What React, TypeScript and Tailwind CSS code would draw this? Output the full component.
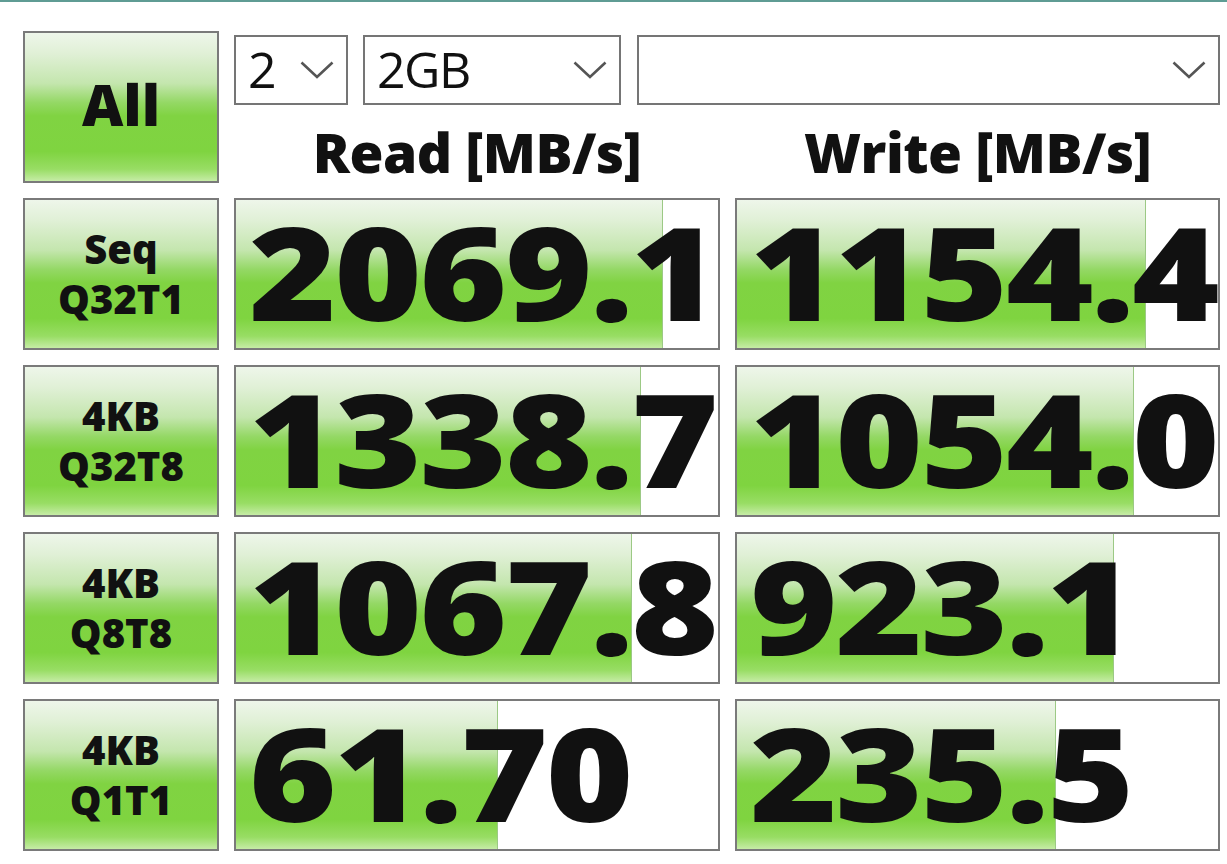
import React from "react";

type Row = {
  top: string;
  bottom: string;
  read: string;
  write: string;
  readBar: number;
  writeBar: number;
};

const rows: Row[] = [
  { top: "Seq", bottom: "Q32T1", read: "2069.1", write: "1154.4", readBar: 427, writeBar: 409 },
  { top: "4KB", bottom: "Q32T8", read: "1338.7", write: "1054.0", readBar: 405, writeBar: 397 },
  { top: "4KB", bottom: "Q8T8", read: "1067.8", write: "923.1", readBar: 396, writeBar: 377 },
  { top: "4KB", bottom: "Q1T1", read: "61.70", write: "235.5", readBar: 262, writeBar: 319 },
];

const green =
  "bg-[linear-gradient(to_bottom,#eef6ea_0%,#e0f0d6_14%,#c4e6ae_34%,#94d865_47%,#80d342_56%,#7fd440_80%,#98dd64_92%,#c6eca6_100%)]";

function Chevron({ className }: { className?: string }) {
  return (
    <svg viewBox="0 0 34 18" className={className} fill="none">
      <path d="M1.5 1.5 L17 16 L32.5 1.5" stroke="#555" strokeWidth="2.6" />
    </svg>
  );
}

function Select({ width, value }: { width: string; value: string }) {
  return (
    <div
      className={`${width} h-[70px] border-2 border-[#757575] bg-white flex items-center justify-between pl-[12px] pr-[12px]`}
    >
      <span className="text-[50px] leading-none tracking-[-1.5px] text-[#111] -mt-[3px]">{value}</span>
      <Chevron className="w-[34px] h-[18px]" />
    </div>
  );
}

function Value({ text, bar }: { text: string; bar: number }) {
  return (
    <div className="relative w-full h-[152px] border-2 border-[#7a7a7a] bg-white">
      <div
        className={`absolute left-0 top-0 bottom-0 ${green} border-r border-[#9cc985]`}
        style={{ width: bar }}
      />
      <div className="relative h-full flex items-center pl-[13px]">
        <span className="inline-block origin-left scale-x-[1.15] text-[130px] font-[760] leading-none text-[#111] tracking-[-2px] -mt-[6px] whitespace-nowrap">
          {text}
        </span>
      </div>
    </div>
  );
}

export default function App() {
  return (
    <div className="w-[1227px] h-[864px] bg-white overflow-hidden font-['Open_Sans',sans-serif] text-[#111]">
      <div className="h-[2px] bg-[#5f9c94]" />
      <div className="pl-[23px] pt-[29px] flex flex-col gap-[15px]">
        {/* header: All button, selectors and column titles */}
        <div className="flex gap-[15px] h-[152px]">
          <div
            className={`w-[196px] h-[152px] shrink-0 border-2 border-[#7a7a7a] ${green} flex items-center justify-center`}
          >
            <span className="text-[57px] font-[780] leading-none -mt-[6px]">All</span>
          </div>
          <div className="w-[986px] flex flex-col">
            <div className="flex mt-[4px]">
              <Select width="w-[114px]" value="2" />
              <div className="w-[15px]" />
              <Select width="w-[258px]" value="2GB" />
              <div className="w-[16px]" />
              <Select width="w-[583px]" value="" />
            </div>
            <div className="flex pt-[16px]">
              <div className="w-[486px] text-center text-[55px] font-[760] leading-[62px] tracking-[-0.5px]">
                Read [MB/s]
              </div>
              <div className="w-[15px]" />
              <div className="w-[485px] text-center text-[55px] font-[760] leading-[62px] tracking-[-0.5px]">
                Write [MB/s]
              </div>
            </div>
          </div>
        </div>

        {rows.map((r, i) => (
          <div key={i} className="grid grid-cols-[196px_486px_485px] gap-x-[15px]">
            <div
              className={`h-[152px] border-2 border-[#7a7a7a] ${green} flex flex-col items-center justify-center`}
            >
              <span className="text-[40px] font-[760] leading-[50px]">{r.top}</span>
              <span className="text-[40px] font-[760] leading-[50px]">{r.bottom}</span>
            </div>
            <Value text={r.read} bar={r.readBar} />
            <Value text={r.write} bar={r.writeBar} />
          </div>
        ))}
      </div>
    </div>
  );
}
